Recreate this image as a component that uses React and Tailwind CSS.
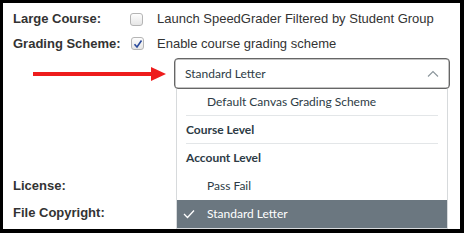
import React from 'react';

const label = "font-['Liberation_Sans',Arial,sans-serif] text-[13px] font-bold text-[#333]";
const body = "font-['Liberation_Sans',Arial,sans-serif] text-[13px] text-[#333]";
const lato = "font-['Lato','Noto_Sans',sans-serif] text-[12px]";

function Checkbox({ checked }) {
  return (
    <div className="w-[13px] h-[13px] rounded-[3px] border border-[#b5b5b5] bg-gradient-to-b from-[#fdfdfd] to-[#e6e6e6] flex items-center justify-center">
      {checked && (
        <svg width="10" height="10" viewBox="0 0 10 10">
          <path d="M1.5 5.2 L4 8 L8.5 1.5" fill="none" stroke="#2a4a9c" strokeWidth="1.6" />
        </svg>
      )}
    </div>
  );
}

function Option({ children, bold, indent, selected, divider, short }) {
  return (
    <div className={`${short ? 'h-[27px]' : 'h-[28px]'} flex items-center ${selected ? 'bg-[#6b7780] text-white' : 'text-[#2d3b45]'}`}>
      <div className={`flex-1 h-full flex items-center mx-[9px] ${divider ? 'border-b border-[#e3e6e8]' : ''}`}>
        {selected && (
          <svg width="12" height="10" viewBox="0 0 12 10" className="ml-[-3px] mr-[12px]">
            <path d="M1 5 L4.5 8.5 L11 1.5" fill="none" stroke="white" strokeWidth="1.3" />
          </svg>
        )}
        <span className={`${bold ? 'font-bold' : ''} ${indent && !selected ? 'pl-[21px]' : ''}`}>{children}</span>
      </div>
    </div>
  );
}

export default function App() {
  return (
    <div className="w-[464px] h-[233px] bg-black pt-[3px] pl-[3px] pr-[4px] pb-[4px]">
      <div className="relative w-full h-full bg-white flex flex-col pl-[10px]">
        <div className="h-[24px] mt-[4px] flex items-center">
          <div className={`w-[117px] ${label}`}>Large Course:</div>
          <Checkbox />
          <div className={`ml-[14px] ${body}`}>Launch SpeedGrader Filtered by Student Group</div>
        </div>
        <div className="h-[25px] flex items-center">
          <div className={`w-[118px] ${label}`}>Grading Scheme:</div>
          <Checkbox checked />
          <div className={`ml-[13px] ${body}`}>Enable course grading scheme</div>
        </div>
        <div className="mt-[2px] h-[31px] flex items-center">
          <div className="w-[161px] pl-[20px] flex items-center">
            <div className="w-[118px] h-[4px] bg-[#ee1c1c]" />
            <svg width="15" height="14" viewBox="0 0 15 14">
              <path d="M0 0 L15 7 L0 14 Z" fill="#ee1c1c" />
            </svg>
          </div>
          <div className={`w-[276px] h-full rounded-[4px] border border-[#666] shadow-[inset_0_0_0_0.5px_#888] flex items-center pl-[10px] pr-[10px] text-[#2d3b45] ${lato}`}>
            <span className="flex-1">Standard Letter</span>
            <svg width="12" height="8" viewBox="0 0 12 8">
              <path d="M1 6.5 L6 1.5 L11 6.5" fill="none" stroke="#8a949b" strokeWidth="1.1" />
            </svg>
          </div>
        </div>
        <div className="flex-1" />
        <div className={`h-[27px] flex items-center ${label}`}>License:</div>
        <div className={`h-[27px] mb-[3px] flex items-center ${label}`}>File Copyright:</div>

        <div className={`absolute left-[173px] top-[86px] w-[272px] border-l border-r border-b border-[#d7dadc] bg-white ${lato}`}>
          <Option indent divider short>Default Canvas Grading Scheme</Option>
          <Option bold divider>Course Level</Option>
          <Option bold>Account Level</Option>
          <Option indent>Pass Fail</Option>
          <Option indent selected>Standard Letter</Option>
        </div>
      </div>
    </div>
  );
}
